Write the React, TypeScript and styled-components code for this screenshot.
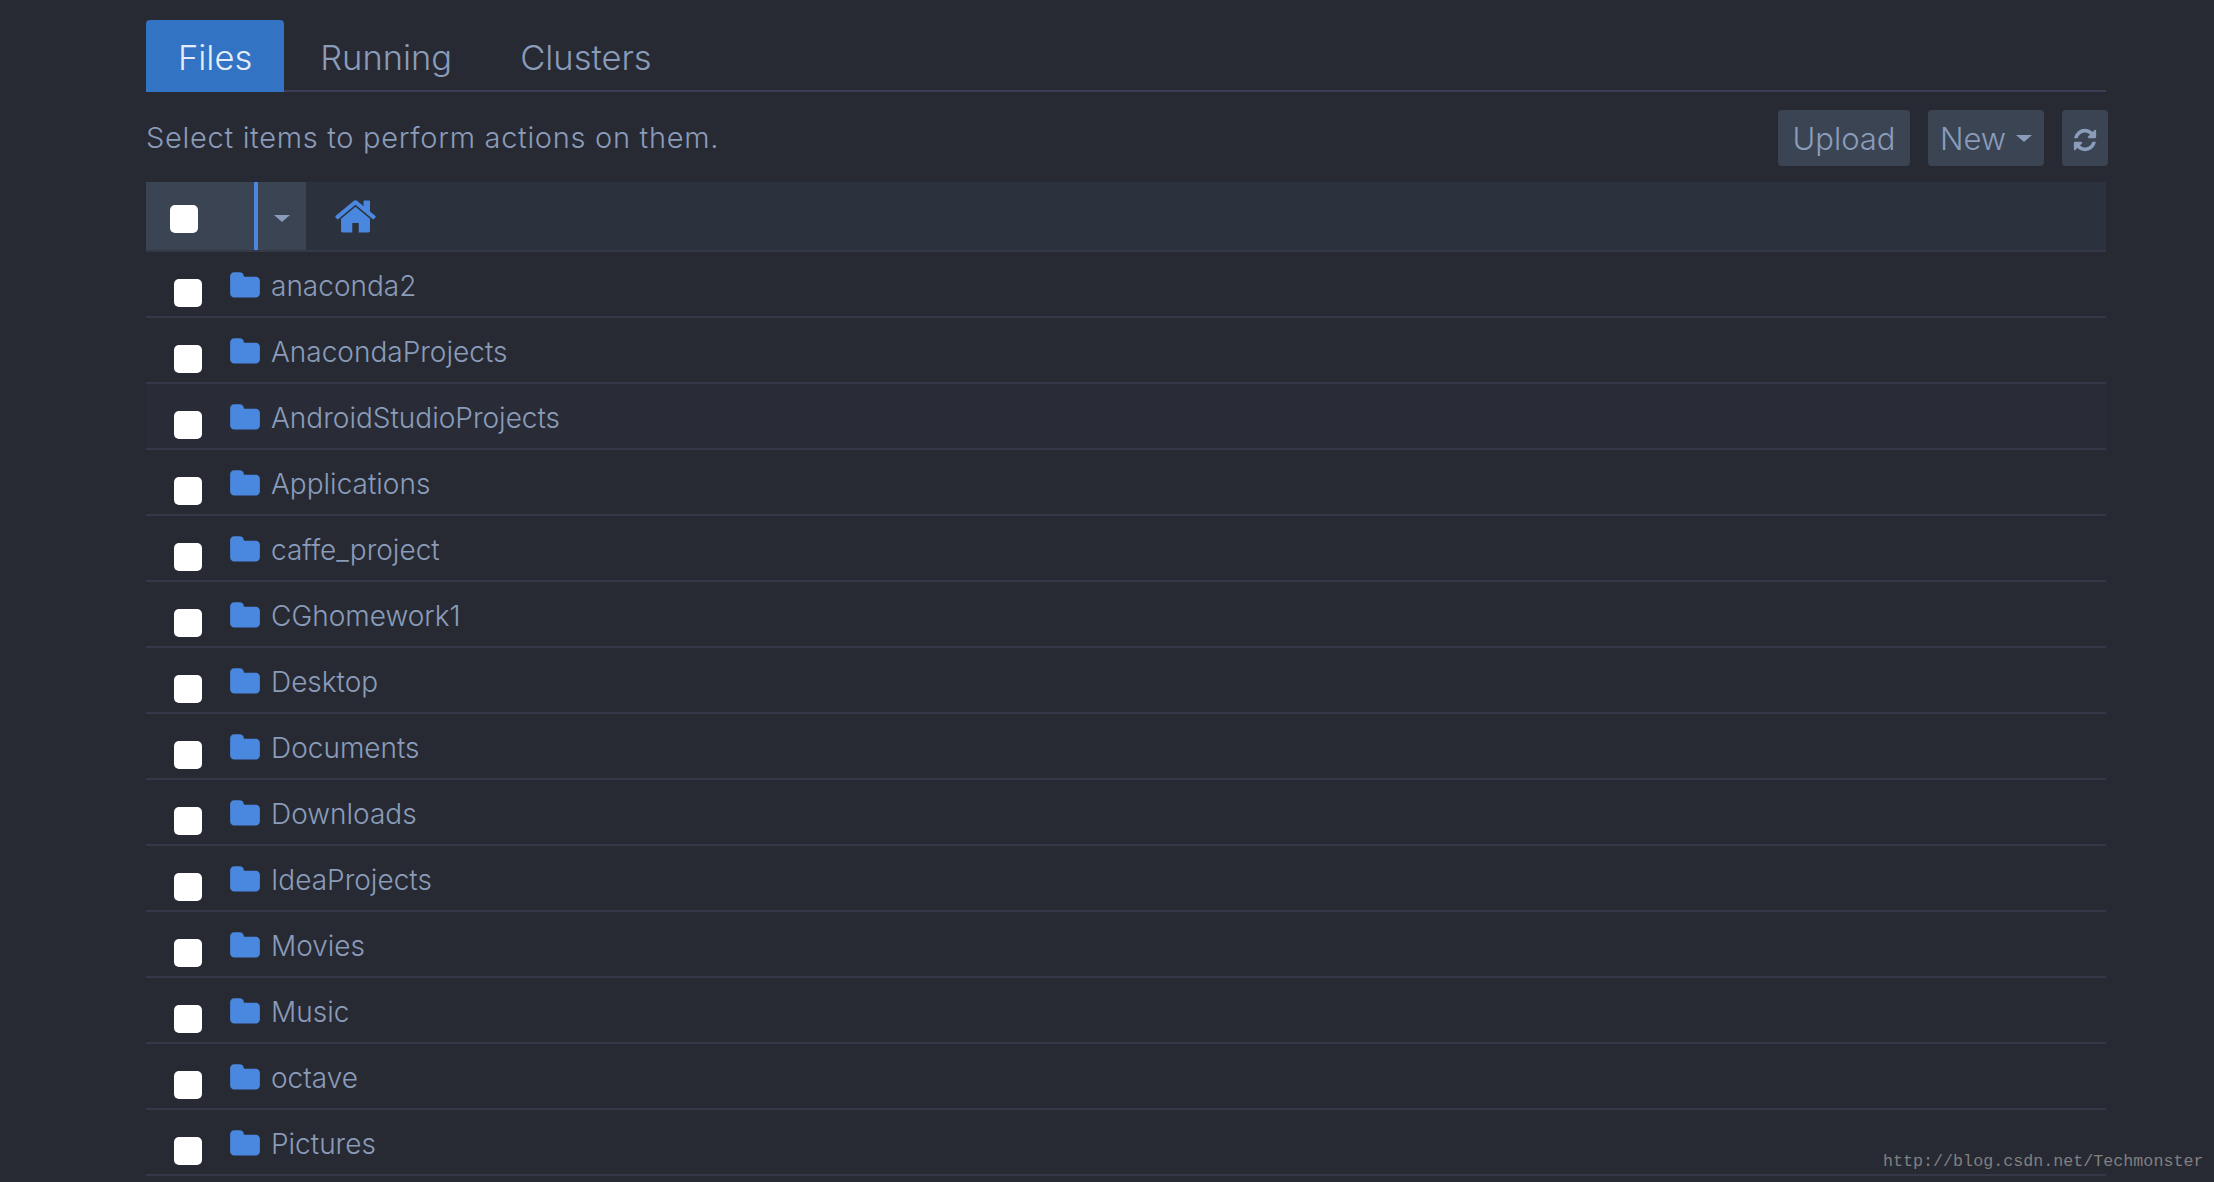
import styled, { createGlobalStyle } from 'styled-components';

const folders = [
  'anaconda2',
  'AnacondaProjects',
  'AndroidStudioProjects',
  'Applications',
  'caffe_project',
  'CGhomework1',
  'Desktop',
  'Documents',
  'Downloads',
  'IdeaProjects',
  'Movies',
  'Music',
  'octave',
  'Pictures',
];

const HOVER_ROW = 'AndroidStudioProjects';

const homePath =
  'M1472 992v480q0 26-19 45t-45 19h-384v-384h-256v384h-384q-26 0-45-19t-19-45v-480q0-1 .5-3t.5-3l575-474 575 474q1 2 1 6zm223-69l-62 74q-8 9-21 11h-3q-13 0-21-7l-692-577-692 577q-12 8-24 7-13-2-21-11l-62-74q-8-10-7-23.5t11-21.5l719-599q32-26 76-26t76 26l244 204v-195q0-14 9-23t23-9h192q14 0 23 9t9 23v408l219 182q10 8 11 21.5t-7 23.5z';
const folderPath =
  'M1728 608v704q0 92-66 158t-158 66h-1216q-92 0-158-66t-66-158v-960q0-92 66-158t158-66h320q92 0 158 66t66 158v32h672q92 0 158 66t66 158z';
const refreshPath =
  'M1639 1056q0 5-1 7-64 268-268 434.5t-478 166.5q-146 0-282.5-55t-243.5-157l-129 129q-19 19-45 19t-45-19-19-45v-448q0-26 19-45t45-19h448q26 0 45 19t19 45-19 45l-137 137q71 66 161 102t187 36q134 0 250-65t186-179q11-17 53-117 8-23 30-23h192q13 0 22.5 9.5t9.5 22.5zm25-800v448q0 26-19 45t-45 19h-448q-26 0-45-19t-19-45 19-45l138-138q-148-137-349-137-134 0-250 65t-186 179q-11 17-53 117-8 23-30 23h-199q-13 0-22.5-9.5t-9.5-22.5v-7q65-268 270-434.5t480-166.5q146 0 284 55.5t245 156.5l130-129q19-19 45-19t45 19 19 45z';

const GlobalStyle = createGlobalStyle`
  html, body {
    margin: 0;
    padding: 0;
    height: 1182px;
    overflow: hidden;
    background: #272a33;
  }
`;

const Page = styled.div`
  width: 1960px;
  margin-left: 146px;
  padding-top: 20px;
  font-family: Inter, 'Noto Sans', sans-serif;
  font-weight: 300;
  color: #8a9cba;
`;

const TabBar = styled.nav`
  display: flex;
  height: 72px;
  border-bottom: 2px solid #3a3f55;
  box-sizing: border-box;
`;

const Tab = styled.a<{ $active?: boolean }>`
  height: 72px;
  box-sizing: border-box;
  padding: 2px 32px 0;
  margin-right: 4px;
  border-radius: 4px 4px 0 0;
  display: flex;
  align-items: center;
  font-size: 34.5px;
  background: ${({ $active }) => ($active ? '#3373c4' : 'transparent')};
  color: ${({ $active }) => ($active ? '#e4ecf7' : '#8a9cba')};
`;

const Toolbar = styled.div`
  height: 90px;
  display: flex;
  align-items: center;
  justify-content: space-between;
  width: 1962px;
`;

const Hint = styled.div`
  font-size: 29px;
  letter-spacing: 0.7px;
`;

const Actions = styled.div`
  display: flex;
  gap: 18px;
  margin-top: 2px;
`;

const ActionButton = styled.button<{ $width: number }>`
  width: ${({ $width }) => $width}px;
  height: 56px;
  border: 0;
  border-radius: 4px;
  background: #3a4452;
  color: #8a9cba;
  font: inherit;
  font-size: 31px;
  display: flex;
  align-items: center;
  justify-content: center;
  gap: 10px;
  padding: 0;
`;

const RefreshIcon = styled.svg`
  width: 26px;
  height: 26px;
  fill: #8a9cba;
  margin-top: 3px;
`;

const Caret = styled.span`
  width: 0;
  height: 0;
  border-left: 8px solid transparent;
  border-right: 8px solid transparent;
  border-top: 7px solid #8a9cba;
`;

const ListHeader = styled.div`
  height: 70px;
  box-sizing: border-box;
  border-bottom: 2px solid #343849;
  background: #2b313d;
  display: flex;
`;

const SelectAll = styled.div`
  width: 108px;
  background: #3a4452;
  display: flex;
  align-items: center;
  padding: 6px 0 0 24px;
  box-sizing: border-box;
`;

const SelectMenu = styled.div`
  width: 52px;
  background: #3a4452;
  border-left: 4px solid #4a88e0;
  box-sizing: border-box;
  display: flex;
  align-items: center;
  justify-content: center;
  padding-top: 4px;
`;

const Check = styled.input.attrs({ type: 'checkbox' })<{ $offset?: number }>`
  appearance: none;
  width: 28px;
  height: 28px;
  margin: ${({ $offset }) => $offset ?? 0}px 0 0;
  border-radius: 5px;
  background: #fff;
  flex: none;
`;

const HomeIcon = styled.svg`
  width: 45px;
  height: 45px;
  fill: #4a88e0;
  margin: 1px 0 0 27px;
  align-self: center;
`;

const Row = styled.div<{ $hover?: boolean }>`
  height: 66px;
  box-sizing: border-box;
  border-bottom: 2px solid #343849;
  background: ${({ $hover }) => ($hover ? '#292c37' : 'transparent')};
  display: flex;
  align-items: center;
  padding-left: 28px;
`;

const FolderIcon = styled.svg`
  width: 32px;
  height: 32px;
  fill: #4a88e0;
  margin: 4px 10px 0 27px;
  flex: none;
`;

const ItemName = styled.a`
  font-size: 28px;
  color: #8a9cba;
  padding-top: 4px;
`;

const Watermark = styled.div`
  position: absolute;
  left: 1883px;
  top: 1152px;
  font-family: 'Liberation Mono', monospace;
  font-size: 16.7px;
  color: #808080;
  white-space: nowrap;
`;

const App = () => (
  <>
    <GlobalStyle />
    <Page>
      <TabBar>
        <Tab $active>Files</Tab>
        <Tab>Running</Tab>
        <Tab>Clusters</Tab>
      </TabBar>
      <Toolbar>
        <Hint>Select items to perform actions on them.</Hint>
        <Actions>
          <ActionButton $width={132}>Upload</ActionButton>
          <ActionButton $width={116}>
            New <Caret />
          </ActionButton>
          <ActionButton $width={46}>
            <RefreshIcon viewBox="0 0 1792 1792">
              <path d={refreshPath} />
            </RefreshIcon>
          </ActionButton>
        </Actions>
      </Toolbar>
      <ListHeader>
        <SelectAll>
          <Check />
        </SelectAll>
        <SelectMenu>
          <Caret />
        </SelectMenu>
        <HomeIcon viewBox="0 0 1792 1792">
          <path d={homePath} />
        </HomeIcon>
      </ListHeader>
      {folders.map((name) => (
        <Row key={name} $hover={name === HOVER_ROW}>
          <Check $offset={17} />
          <FolderIcon viewBox="0 0 1792 1792">
            <path d={folderPath} />
          </FolderIcon>
          <ItemName>{name}</ItemName>
        </Row>
      ))}
    </Page>
    <Watermark>http://blog.csdn.net/Techmonster</Watermark>
  </>
);

export default App;
